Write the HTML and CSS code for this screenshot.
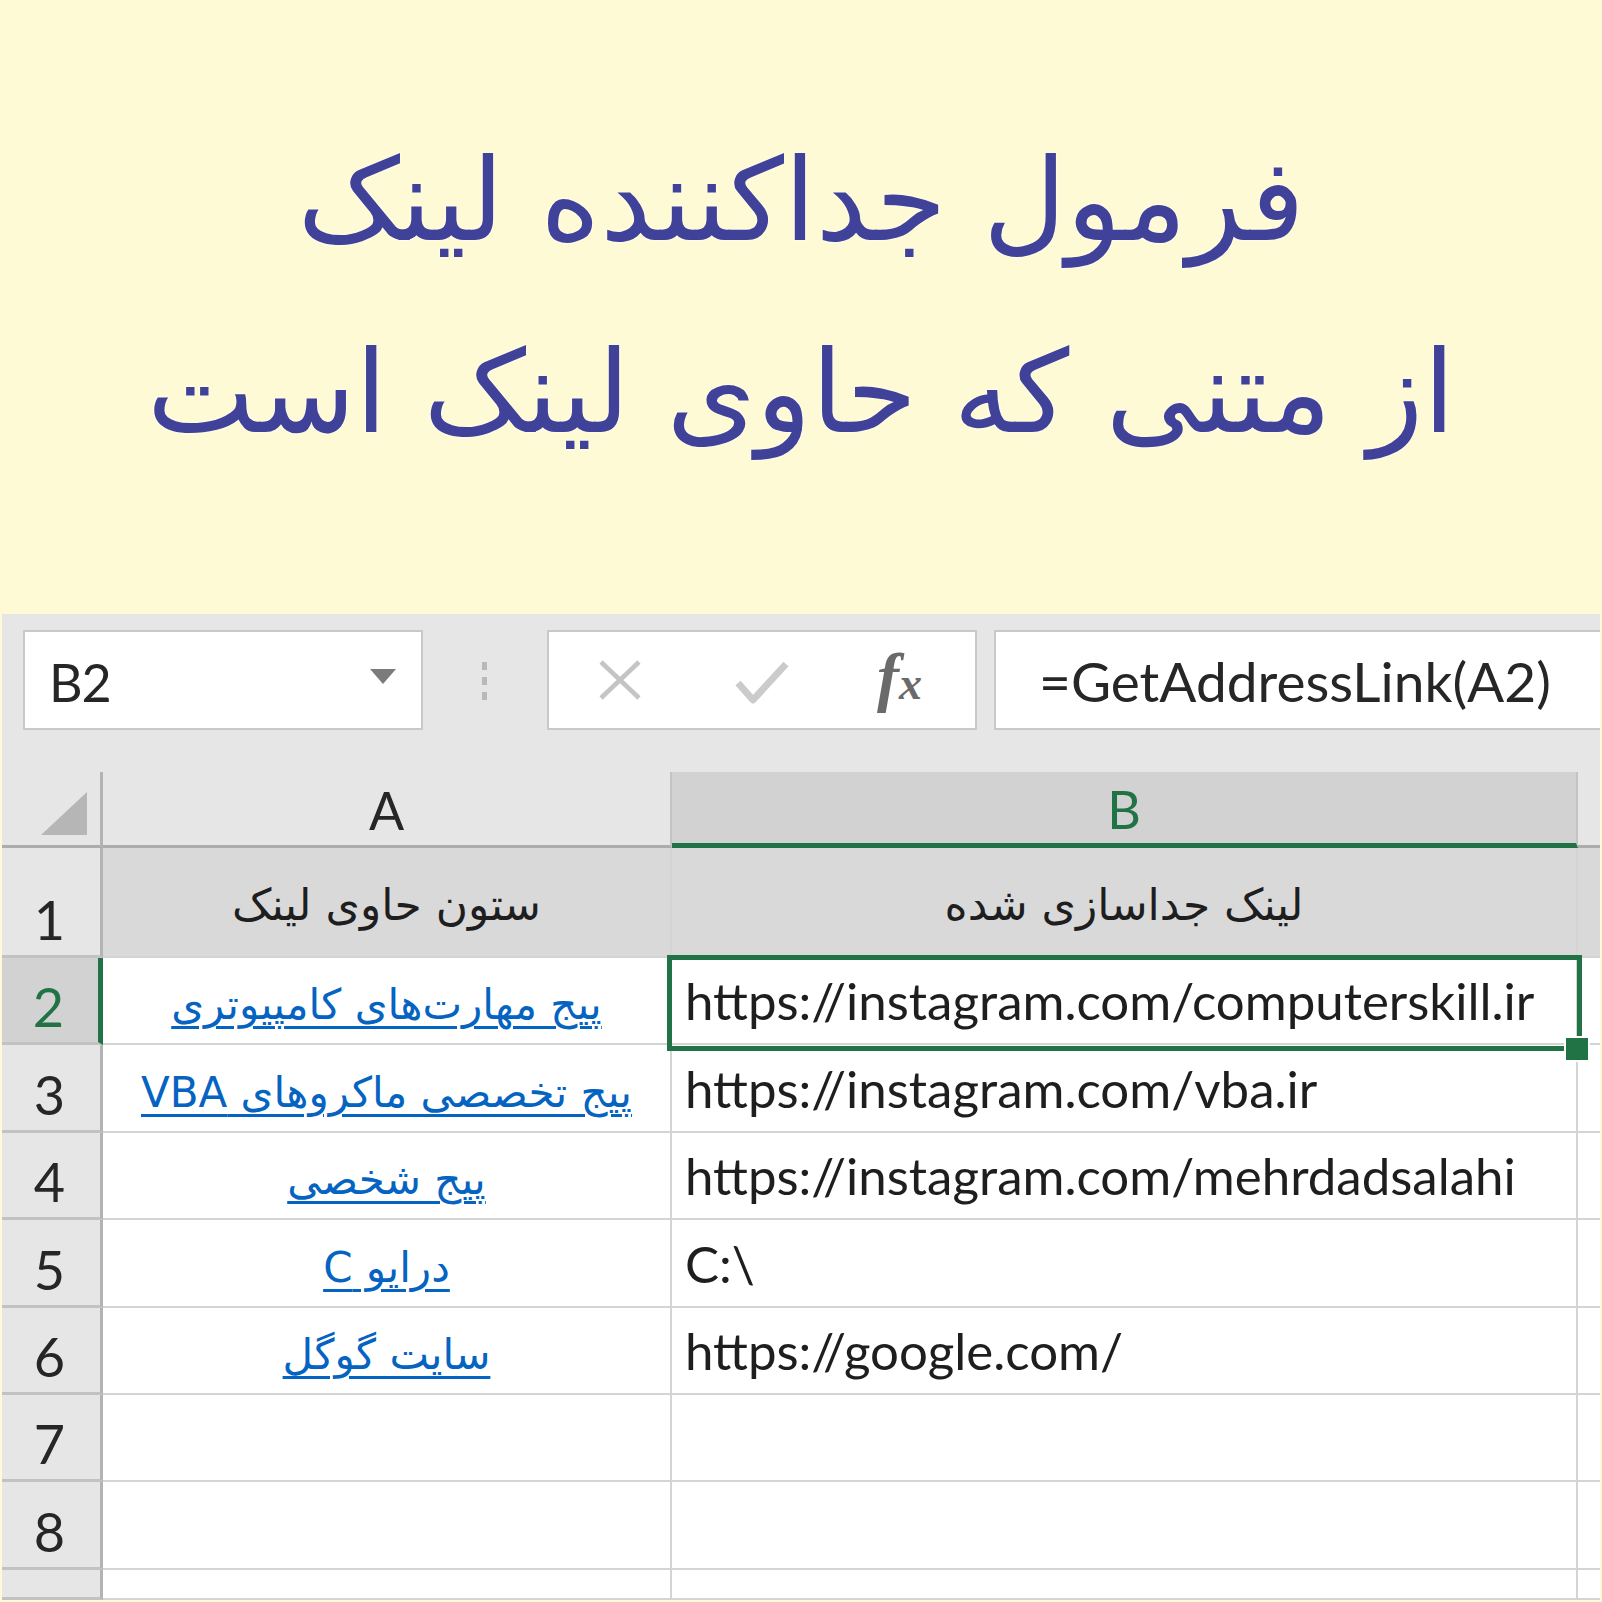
FILE: index.html
```html
<!DOCTYPE html>
<html lang="fa">
<head>
<meta charset="utf-8">
<title>فرمول جداکننده لینک</title>
<link rel="stylesheet" href="styles.css">
</head>
<body>
<header class="banner">
  <p class="banner-line" dir="rtl">فرمول جداکننده لینک</p>
  <p class="banner-line" dir="rtl">از متنی که حاوی لینک است</p>
</header>
<section class="excel">
  <div class="toolbar">
    <div class="namebox">
      <span class="namebox-text">B2</span>
      <svg class="namebox-caret" width="26" height="15" viewBox="0 0 26 15"><path d="M0 0H26L13 15Z" fill="#7b7b7b"/></svg>
    </div>
    <div class="grip"><i></i><i></i><i></i></div>
    <div class="fbuttons">
      <svg class="fb-cancel" width="44" height="40" viewBox="0 0 44 40"><path d="M3 2L41 38M41 2L3 38" stroke="#c4c4c4" stroke-width="4.5" fill="none"/></svg>
      <svg class="fb-enter" width="54" height="44" viewBox="0 0 54 44"><path d="M3 22L18 39L51 3" stroke="#cbcbcb" stroke-width="7" fill="none" stroke-linejoin="round"/></svg>
      <span class="fb-fx"><span class="fx-f">f</span><span class="fx-x">x</span></span>
    </div>
    <div class="fbar"><span class="fbar-text">=GetAddressLink(A2)</span></div>
  </div>
  <div class="sheet">
    <div class="corner"><svg width="46" height="43" viewBox="0 0 46 43"><path d="M46 0V43H0Z" fill="#b6b6b6"/></svg></div>
    <div class="colhead">A</div>
    <div class="colhead colhead-sel">B</div>
    <div class="colhead colhead-c"></div>

    <div class="rowhead">1</div>
    <div class="cell cell-title" dir="rtl">ستون حاوی لینک</div>
    <div class="cell cell-title" dir="rtl">لینک جداسازی شده</div>
    <div class="cell cell-title cell-c"></div>

    <div class="rowhead rowhead-sel">2</div>
    <div class="cell cell-link"><a dir="rtl">پیج مهارت‌های کامپیوتری</a></div>
    <div class="cell cell-url">https://instagram.com/computerskill.ir</div>
    <div class="cell cell-c"></div>

    <div class="rowhead">3</div>
    <div class="cell cell-link"><a dir="rtl">پیج تخصصی ماکروهای VBA</a></div>
    <div class="cell cell-url">https://instagram.com/vba.ir</div>
    <div class="cell cell-c"></div>

    <div class="rowhead">4</div>
    <div class="cell cell-link"><a dir="rtl">پیج شخصی</a></div>
    <div class="cell cell-url">https://instagram.com/mehrdadsalahi</div>
    <div class="cell cell-c"></div>

    <div class="rowhead">5</div>
    <div class="cell cell-link"><a dir="rtl">درایو C</a></div>
    <div class="cell cell-url">C:\</div>
    <div class="cell cell-c"></div>

    <div class="rowhead">6</div>
    <div class="cell cell-link"><a dir="rtl">سایت گوگل</a></div>
    <div class="cell cell-url">https://google.com/</div>
    <div class="cell cell-c"></div>

    <div class="rowhead">7</div>
    <div class="cell"></div>
    <div class="cell"></div>
    <div class="cell cell-c"></div>

    <div class="rowhead">8</div>
    <div class="cell"></div>
    <div class="cell"></div>
    <div class="cell cell-c"></div>

    <div class="rowhead"></div>
    <div class="cell"></div>
    <div class="cell"></div>
    <div class="cell cell-c"></div>

    <div class="selection"><span class="handle"></span></div>
  </div>
</section>
</body>
</html>
```

FILE: styles.css
```css
* { box-sizing: border-box; }
html, body { margin: 0; padding: 0; }
body {
  width: 1602px;
  height: 1602px;
  overflow: hidden;
  background: #fffad6;
  font-family: Lato, "DejaVu Sans", sans-serif;
  color: #1e1e1e;
}

/* ---------- banner ---------- */
.banner {
  height: 614px;
  padding-top: 105px;
  display: flex;
  flex-direction: column;
  align-items: center;
}
.banner-line {
  margin: 0;
  font-family: "DejaVu Sans", sans-serif;
  font-size: 114.5px;
  line-height: 192px;
  color: #3f4298;
  text-shadow: 0 0 2px #ffffff;
  white-space: nowrap;
}

/* ---------- excel ---------- */
.excel {
  margin: 0 2px;
  height: 986px;
  background: #e6e6e6;
  display: flex;
  flex-direction: column;
  overflow: hidden;
}

.toolbar {
  height: 158px;
  flex: none;
  display: flex;
  align-items: flex-start;
  padding: 16px 0 0 21px;
}
.namebox {
  width: 400px;
  height: 100px;
  background: #fff;
  border: 2px solid #c9c9c9;
  display: flex;
  align-items: center;
  padding: 0 25px 0 24px;
}
.namebox-text {
  font-size: 52px;
  color: #262626;
  line-height: 1;
  margin-top: 4px;
  letter-spacing: -1px;
}
.namebox-caret { margin-left: auto; margin-top: -8px; }

.grip {
  margin: 32px 0 0 59px;
  width: 5px;
  display: flex;
  flex-direction: column;
  gap: 7px;
}
.grip i {
  display: block;
  width: 5px;
  height: 8px;
  background: #b9b9b9;
}

.fbuttons {
  margin-left: 60px;
  width: 430px;
  height: 100px;
  background: #fff;
  border: 2px solid #c9c9c9;
  display: flex;
  align-items: center;
  padding-left: 49px;
}
.fb-enter { margin-left: 93px; margin-top: 6px; }
.fb-fx {
  margin-left: 88px;
  font-family: "Liberation Serif", serif;
  font-style: italic;
  color: #6a6a6a;
  display: flex;
  align-items: baseline;
  margin-top: -6px;
}
.fx-f { font-size: 66px; line-height: 1; font-weight: bold; }
.fx-x { font-size: 46px; line-height: 1; font-weight: bold; }

.fbar {
  margin-left: 17px;
  flex: 1;
  margin-right: -10px;
  height: 100px;
  background: #fff;
  border: 2px solid #c9c9c9;
  display: flex;
  align-items: center;
  padding-left: 43px;
}
.fbar-text {
  font-size: 55px;
  color: #262626;
  line-height: 1;
  margin-top: 2px;
  white-space: nowrap;
}

/* ---------- sheet grid ---------- */
.sheet {
  flex: 1;
  position: relative;
  display: grid;
  grid-template-columns: 101px 569px 906px 1fr;
  grid-template-rows: 76px 110px repeat(7, 87.4px) 1fr;
}
.corner {
  border-right: 3px solid #b3b3b3;
  border-bottom: 3px solid #acacac;
  display: flex;
  align-items: flex-end;
  justify-content: flex-end;
  padding: 0 13px 10px 0;
}
.colhead {
  border-right: 2px solid #c3c3c3;
  border-bottom: 3px solid #acacac;
  display: flex;
  align-items: center;
  justify-content: center;
  font-size: 52px;
  color: #262626;
  line-height: 1;
  padding-top: 2px;
}
.colhead-sel {
  background: #d2d2d2;
  color: #217346;
  border-bottom: 5px solid #217346;
}
.colhead-c { border-right: none; }

.rowhead {
  border-right: 3px solid #b3b3b3;
  border-bottom: 3px solid #c2c2c2;
  display: flex;
  align-items: flex-end;
  justify-content: center;
  font-size: 54px;
  line-height: 54px;
  color: #262626;
  padding: 0 3px 8px 0;
}
.rowhead-sel {
  background: #d2d2d2;
  color: #217346;
  border-right: 5px solid #217346;
}

.cell {
  background: #fff;
  border-right: 2px solid #d4d4d4;
  border-bottom: 2px solid #d4d4d4;
  display: flex;
  white-space: nowrap;
  overflow: hidden;
}
.cell-c { border-right: none; }
.cell-title {
  background: #d9d9d9;
  align-items: center;
  justify-content: center;
  font-family: "DejaVu Sans", sans-serif;
  font-size: 44px;
  color: #1e1e1e;
  padding-top: 4px;
}
.cell-link {
  align-items: flex-end;
  justify-content: center;
  padding-bottom: 14px;
}
.cell-link a {
  font-family: "DejaVu Sans", sans-serif;
  font-size: 42px;
  line-height: 48px;
  color: #0563c1;
  text-decoration: underline;
  text-decoration-thickness: 3px;
  text-underline-offset: 7px;
}
.cell-url {
  align-items: flex-end;
  padding: 0 0 16px 13px;
  font-size: 51px;
  line-height: 52px;
  color: #1e1e1e;
}

/* selection overlay */
.selection {
  position: absolute;
  left: 665px;
  top: 183px;
  width: 915px;
  height: 96px;
  border: 5px solid #217346;
}
.handle {
  position: absolute;
  left: 892px;
  top: 76px;
  width: 26px;
  height: 26px;
  background: #217346;
  border: 2px solid #ffffff;
}
```
